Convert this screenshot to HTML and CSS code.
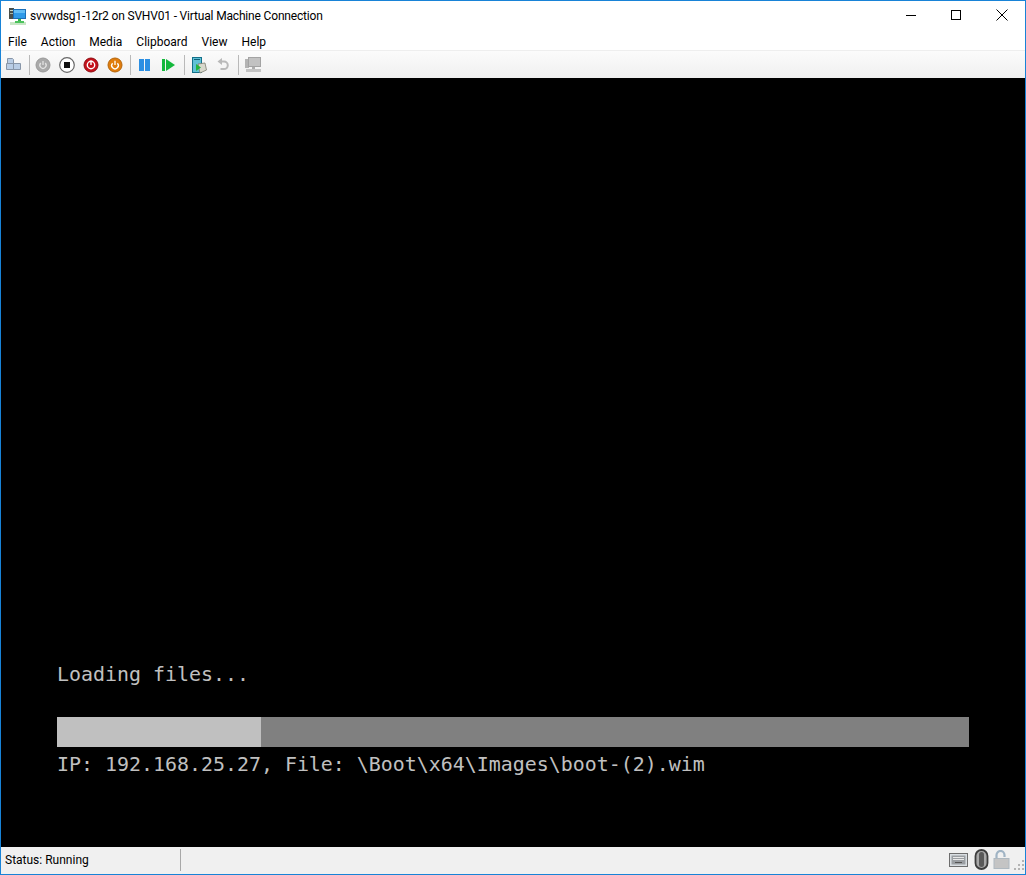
FILE: index.html
```html
<!DOCTYPE html>
<html lang="en">
<head>
<meta charset="utf-8">
<title>svvwdsg1-12r2 on SVHV01 - Virtual Machine Connection</title>
<link rel="stylesheet" href="styles.css">
</head>
<body>
<div class="window">
  <header class="titlebar">
    <svg class="app-icon" width="18" height="18" viewBox="0 0 18 18">
      <rect x="0" y="1" width="5" height="11" fill="#4a4f4a"/>
      <rect x="1" y="3" width="3" height="1" fill="#c8d8c8"/>
      <rect x="1" y="6" width="3" height="1" fill="#a8b8a8"/>
      <rect x="4.500" y="2.500" width="12" height="9" fill="#2f9ae8" stroke="#1b6fb8" stroke-width="1"/>
      <rect x="5" y="3" width="11" height="3" fill="#62bdf5"/>
      <rect x="9" y="12" width="3" height="3" fill="#35b24a"/>
      <rect x="1" y="15" width="16" height="3" fill="#c7e6c5"/>
      <rect x="6" y="14" width="9" height="2" fill="#4cc35d"/>
    </svg>
    <span class="title">svvwdsg1-12r2 on SVHV01 - Virtual Machine Connection</span>
    <div class="caption-buttons">
      <svg class="cap" width="46" height="29" viewBox="0 0 46 29"><path d="M19 14.500h10" stroke="#000" stroke-width="1" fill="none"/></svg>
      <svg class="cap" width="46" height="29" viewBox="0 0 46 29"><rect x="18.500" y="9.500" width="9" height="9" stroke="#000" fill="none"/></svg>
      <svg class="cap" width="46" height="29" viewBox="0 0 46 29"><path d="M17.500 8.500l11 11M28.500 8.500l-11 11" stroke="#000" stroke-width="1" fill="none"/></svg>
    </div>
  </header>
  <nav class="menubar">
    <span class="menu-item">File</span>
    <span class="menu-item">Action</span>
    <span class="menu-item">Media</span>
    <span class="menu-item">Clipboard</span>
    <span class="menu-item">View</span>
    <span class="menu-item">Help</span>
  </nav>
  <div class="toolbar">
    <svg class="tool" width="16" height="16" viewBox="0 0 16 16">
      <path d="M1.500 1.500h5l1 1v4h-6zM.5 6.500h7v6h-7zM7.500 6.500h7v6h-7z" fill="#b9cde5" stroke="#8896a8"/>
    </svg>
    <span class="sep"></span>
    <svg class="tool" width="16" height="16" viewBox="0 0 16 16">
      <circle cx="8" cy="8" r="7" fill="#a9a9a9" stroke="#9a9a9a"/>
      <path d="M5.800 6a3.100 3.100 0 1 0 4.400 0M8 4v4" fill="none" stroke="#e2e2e2" stroke-width="1.300"/>
    </svg>
    <svg class="tool stop" width="16" height="16" viewBox="0 0 16 16">
      <circle cx="8" cy="8" r="7.300" fill="#fff" stroke="#666" stroke-width="1.200"/>
      <rect x="5" y="5" width="6" height="6" fill="#111"/>
    </svg>
    <svg class="tool" width="16" height="16" viewBox="0 0 16 16">
      <circle cx="8" cy="8" r="7" fill="#c4101a" stroke="#8e0c12"/>
      <circle cx="8" cy="8" r="3.700" fill="none" stroke="#fff" stroke-width="1.400"/>
      <path d="M8 3.500v4.500" stroke="#fff" stroke-width="1.400"/>
    </svg>
    <svg class="tool" width="16" height="16" viewBox="0 0 16 16">
      <circle cx="8" cy="8" r="7" fill="#e07c0c" stroke="#b5660c"/>
      <path d="M5.600 6.200a3.300 3.300 0 1 0 4.800 0M8 3.800v4.200" fill="none" stroke="#fff" stroke-width="1.300"/>
    </svg>
    <span class="sep"></span>
    <svg class="tool" width="16" height="16" viewBox="0 0 16 16">
      <rect x="3" y="2" width="5" height="12" fill="#2b8fe3"/>
      <rect x="9" y="2" width="5" height="12" fill="#2b8fe3"/>
    </svg>
    <svg class="tool" width="17" height="16" viewBox="0 0 17 16">
      <rect x="2" y="2" width="3" height="12" fill="#14b83c"/>
      <path d="M6 2l9 6-9 6z" fill="#14b83c"/>
    </svg>
    <span class="sep"></span>
    <svg class="tool" width="17" height="18" viewBox="0 0 17 18">
      <rect x="2.500" y="1.500" width="9" height="15" fill="#5fc1d6" stroke="#14708a"/>
      <rect x="4" y="3" width="6" height="1" fill="#0f5f78"/>
      <path d="M8 8l7-1 1.500 7-6.500 3z" fill="#d8d8cc" stroke="#7d7d70" stroke-width=".8"/>
      <path d="M6 8v7l5-3.500z" fill="#22b53c"/>
    </svg>
    <svg class="tool" width="16" height="16" viewBox="0 0 16 16">
      <path d="M6 4.500h3a3.800 3.800 0 0 1 0 7.600H5.500" fill="none" stroke="#b9b9b9" stroke-width="2"/>
      <path d="M7 1L2.500 4.500 7 8z" fill="#b9b9b9"/>
    </svg>
    <span class="sep"></span>
    <svg class="tool" width="17" height="16" viewBox="0 0 17 16">
      <rect x="1" y="2" width="4" height="9" fill="#b4b4b4"/>
      <rect x="4.500" y=".5" width="12" height="9" fill="#c2c2c2" stroke="#a3a3a3"/>
      <rect x="8" y="10" width="3" height="2" fill="#adadad"/>
      <rect x="2" y="12" width="15" height="3" fill="#c4c4c4"/>
    </svg>
  </div>
  <main class="screen">
    <p class="console loading">Loading files...</p>
    <div class="progress"><div class="progress-fill"></div></div>
    <p class="console file">IP: 192.168.25.27, File: \Boot\x64\Images\boot-(2).wim</p>
  </main>
  <footer class="statusbar">
    <span class="status">Status: Running</span>
    <span class="status-sep"></span>
    <div class="status-icons">
      <svg width="20" height="16" viewBox="0 0 20 16">
        <rect x=".5" y="1.500" width="18" height="13" fill="#d9dee2" stroke="#6d6d6d"/>
        <rect x="2.500" y="3.500" width="14" height="9" fill="#9a9ea2"/>
        <path d="M4 5.500h11M4 7.500h11" stroke="#e9e9e9"/>
        <path d="M6 10.500h7" stroke="#555"/>
      </svg>
      <svg width="15" height="22" viewBox="0 0 15 22">
        <rect x="1.500" y="1" width="12" height="19" rx="6" fill="#a9a9a9" stroke="#3d3d3d" stroke-width="1.800"/>
        <rect x="5" y="3" width="5" height="15" rx="2.500" fill="#5a5a5a"/>
      </svg>
      <svg class="lock" width="18" height="20" viewBox="0 0 18 20">
        <path d="M3.500 9V5a4 4 0 0 1 8 0v2" fill="none" stroke="#9fb3c4" stroke-width="2.200"/>
        <rect x="1" y="8.500" width="15" height="10" fill="#c4c4c4" stroke="#aeb8c0"/>
      </svg>
      <svg class="grip" width="12" height="12" viewBox="0 0 12 12">
        <path d="M9 1h2v2H9zM5 5h2v2H5zM9 5h2v2H9zM1 9h2v2H1zM5 9h2v2H5zM9 9h2v2H9z" fill="#b4b4b4"/>
      </svg>
    </div>
  </footer>
</div>
</body>
</html>
```

FILE: styles.css
```css
* {
  box-sizing: border-box;
}

html,
body {
  margin: 0;
  padding: 0;
  background: #000;
}

.window {
  display: flex;
  flex-direction: column;
  width: 1026px;
  height: 875px;
  border: 1px solid #1883d7;
  background: #fff;
  font-family: Roboto, "Noto Sans", sans-serif;
  color: #000;
  overflow: hidden;
}

.titlebar {
  display: flex;
  align-items: center;
  flex: 0 0 29px;
  padding-left: 8px;
  background: #fff;
}

.app-icon {
  flex: none;
  margin-right: 3px;
}

.title {
  font-size: 12px;
  letter-spacing: -0.17px;
  white-space: nowrap;
}

.caption-buttons {
  display: flex;
  margin-left: auto;
}

.cap {
  display: block;
}

.menubar {
  display: flex;
  align-items: center;
  flex: 0 0 20px;
  gap: 14px;
  padding: 3px 0 0 7px;
  font-size: 12px;
  background: #fff;
}

.toolbar {
  display: flex;
  align-items: center;
  flex: 0 0 28px;
  padding-left: 5px;
  gap: 8px;
  border-top: 1px solid #eeeeee;
  background: linear-gradient(#fbfbfb, #f0f0f0);
}

.tool {
  flex: none;
  display: block;
}

.sep {
  flex: none;
  width: 1px;
  height: 20px;
  margin: 0 -3px 0 -1px;
  background: #b9b9b9;
}

.screen {
  flex: 1 1 auto;
  display: flex;
  flex-direction: column;
  padding: 582px 56px 0;
  background: #000;
}

.console {
  margin: 0;
  font-family: "DejaVu Sans Mono", "Liberation Mono", monospace;
  font-size: 19.93px;
  line-height: 30px;
  color: #c0c0c0;
  white-space: pre;
}

.progress {
  flex: none;
  height: 30px;
  margin-top: 27px;
  background: #808080;
}

.progress-fill {
  width: 204px;
  height: 100%;
  background: #c0c0c0;
}

.file {
  margin-top: 3px;
}

.statusbar {
  display: flex;
  align-items: center;
  flex: 0 0 27px;
  padding: 0 0 1px 4px;
  background: #f0f0f0;
  font-size: 12px;
}

.status {
  width: 175px;
  white-space: nowrap;
}

.status-sep {
  width: 1px;
  height: 22px;
  background: #a8a8a8;
}

.status-icons {
  display: flex;
  align-items: center;
  gap: 5px;
  margin-left: auto;
}

.status-icons svg {
  display: block;
}

.status-icons .lock {
  margin-left: -1px;
}

.status-icons .grip {
  margin-left: -3px;
  align-self: flex-end;
}
```
